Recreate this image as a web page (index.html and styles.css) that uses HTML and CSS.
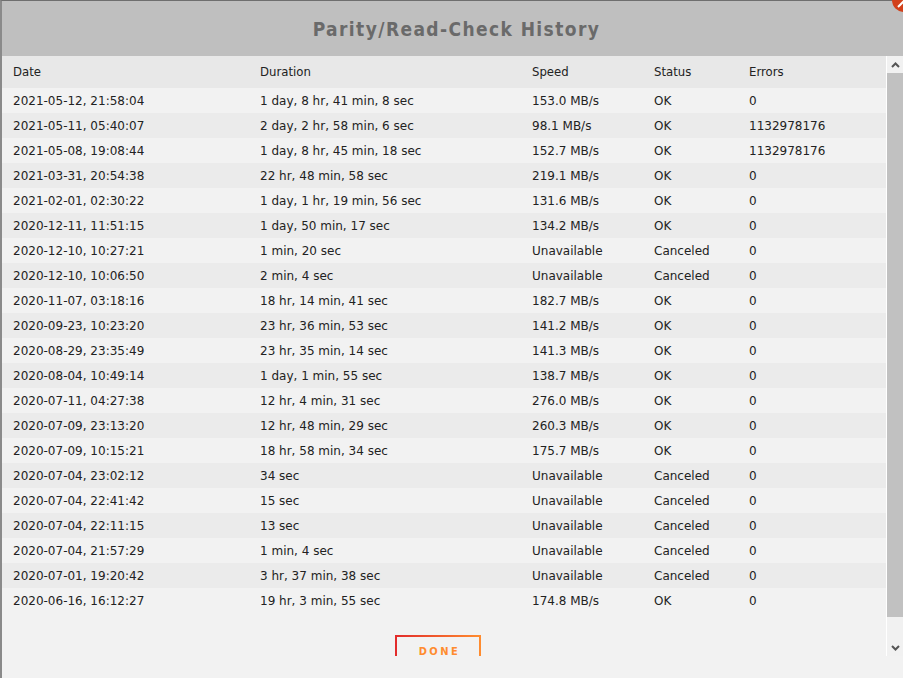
FILE: index.html
```html
<!DOCTYPE html>
<html lang="en">
<head>
    <meta charset="UTF-8" />
    <title>Parity/Read-Check History</title>
    <link rel="stylesheet" href="styles.css">
</head>
<body>
    <div class="dialog">
        <div class="close-btn">
            <svg width="10" height="10" viewBox="0 0 10 10"><path d="M2 8 L8 2" stroke="#fff" stroke-width="2"/></svg>
        </div>
        <div class="title-bar">
            <h1>Parity/Read-Check History</h1>
        </div>

        <div class="body-wrap">
            <div class="content">
                <table class="history">
                    <thead>
                        <tr>
                            <th class="c-date">Date</th>
                            <th class="c-dur">Duration</th>
                            <th class="c-speed">Speed</th>
                            <th class="c-status">Status</th>
                            <th>Errors</th>
                        </tr>
                    </thead>
                    <tbody>
                        <tr><td>2021-05-12, 21:58:04</td><td>1 day, 8 hr, 41 min, 8 sec</td><td>153.0 MB/s</td><td>OK</td><td>0</td></tr>
                        <tr><td>2021-05-11, 05:40:07</td><td>2 day, 2 hr, 58 min, 6 sec</td><td>98.1 MB/s</td><td>OK</td><td>1132978176</td></tr>
                        <tr><td>2021-05-08, 19:08:44</td><td>1 day, 8 hr, 45 min, 18 sec</td><td>152.7 MB/s</td><td>OK</td><td>1132978176</td></tr>
                        <tr><td>2021-03-31, 20:54:38</td><td>22 hr, 48 min, 58 sec</td><td>219.1 MB/s</td><td>OK</td><td>0</td></tr>
                        <tr><td>2021-02-01, 02:30:22</td><td>1 day, 1 hr, 19 min, 56 sec</td><td>131.6 MB/s</td><td>OK</td><td>0</td></tr>
                        <tr><td>2020-12-11, 11:51:15</td><td>1 day, 50 min, 17 sec</td><td>134.2 MB/s</td><td>OK</td><td>0</td></tr>
                        <tr><td>2020-12-10, 10:27:21</td><td>1 min, 20 sec</td><td>Unavailable</td><td>Canceled</td><td>0</td></tr>
                        <tr><td>2020-12-10, 10:06:50</td><td>2 min, 4 sec</td><td>Unavailable</td><td>Canceled</td><td>0</td></tr>
                        <tr><td>2020-11-07, 03:18:16</td><td>18 hr, 14 min, 41 sec</td><td>182.7 MB/s</td><td>OK</td><td>0</td></tr>
                        <tr><td>2020-09-23, 10:23:20</td><td>23 hr, 36 min, 53 sec</td><td>141.2 MB/s</td><td>OK</td><td>0</td></tr>
                        <tr><td>2020-08-29, 23:35:49</td><td>23 hr, 35 min, 14 sec</td><td>141.3 MB/s</td><td>OK</td><td>0</td></tr>
                        <tr><td>2020-08-04, 10:49:14</td><td>1 day, 1 min, 55 sec</td><td>138.7 MB/s</td><td>OK</td><td>0</td></tr>
                        <tr><td>2020-07-11, 04:27:38</td><td>12 hr, 4 min, 31 sec</td><td>276.0 MB/s</td><td>OK</td><td>0</td></tr>
                        <tr><td>2020-07-09, 23:13:20</td><td>12 hr, 48 min, 29 sec</td><td>260.3 MB/s</td><td>OK</td><td>0</td></tr>
                        <tr><td>2020-07-09, 10:15:21</td><td>18 hr, 58 min, 34 sec</td><td>175.7 MB/s</td><td>OK</td><td>0</td></tr>
                        <tr><td>2020-07-04, 23:02:12</td><td>34 sec</td><td>Unavailable</td><td>Canceled</td><td>0</td></tr>
                        <tr><td>2020-07-04, 22:41:42</td><td>15 sec</td><td>Unavailable</td><td>Canceled</td><td>0</td></tr>
                        <tr><td>2020-07-04, 22:11:15</td><td>13 sec</td><td>Unavailable</td><td>Canceled</td><td>0</td></tr>
                        <tr><td>2020-07-04, 21:57:29</td><td>1 min, 4 sec</td><td>Unavailable</td><td>Canceled</td><td>0</td></tr>
                        <tr><td>2020-07-01, 19:20:42</td><td>3 hr, 37 min, 38 sec</td><td>Unavailable</td><td>Canceled</td><td>0</td></tr>
                        <tr><td>2020-06-16, 16:12:27</td><td>19 hr, 3 min, 55 sec</td><td>174.8 MB/s</td><td>OK</td><td>0</td></tr>
                    </tbody>
                </table>

                <div class="actions">
                    <button type="button" class="btn-done">DONE</button>
                </div>
            </div>

            <div class="scrollbar">
                <div class="sb-arrow">
                    <svg width="9" height="6" viewBox="0 0 9 6"><path d="M1 5 L4.5 1.5 L8 5" fill="none" stroke="#555" stroke-width="2"/></svg>
                </div>
                <div class="sb-track">
                    <div class="sb-thumb"></div>
                </div>
                <div class="sb-arrow">
                    <svg width="9" height="6" viewBox="0 0 9 6"><path d="M1 1 L4.5 4.5 L8 1" fill="none" stroke="#555" stroke-width="2"/></svg>
                </div>
            </div>
        </div>
    </div>
</body>
</html>
```

FILE: styles.css
```css
body {
    margin: 0;
    padding: 0;
    background: #f2f2f2;
    font-family: 'DejaVu Sans', Verdana, sans-serif;
    color: #222;
    overflow: hidden;
}

.dialog {
    position: relative;
    height: 678px;
    border-left: 2px solid #8a8a8a;
    border-top: 1px solid #6e6e6e;
    box-sizing: border-box;
    background: #f2f2f2;
}

.close-btn {
    position: absolute;
    top: -13px;
    right: -13px;
    width: 24px;
    height: 24px;
    border-radius: 50%;
    background: #d2401a;
    display: flex;
    align-items: flex-end;
    justify-content: flex-start;
    padding: 0 0 3px 4px;
    box-sizing: border-box;
}

.title-bar {
    height: 55px;
    background: #bfbfbf;
    display: flex;
    align-items: center;
    justify-content: center;
    padding-left: 8px;
}

.title-bar h1 {
    margin: 0;
    font-family: 'DejaVu Sans Condensed', 'DejaVu Sans', sans-serif;
    font-size: 19px;
    font-weight: bold;
    letter-spacing: 1.4px;
    color: #6a6a6a;
}

.body-wrap {
    display: flex;
    height: 600px;
}

.content {
    flex: 1;
    overflow: hidden;
}

.history {
    width: 100%;
    border-collapse: collapse;
    font-size: 12px;
}

.history th {
    font-family: 'DejaVu Sans Condensed', 'DejaVu Sans', sans-serif;
    font-weight: normal;
    font-size: 13px;
    text-align: left;
    height: 32px;
    padding: 0 0 1px 11px;
    box-sizing: border-box;
    background: #e8e8e8;
    color: #222;
}

.history td {
    height: 25px;
    padding: 1px 0 0 11px;
    box-sizing: border-box;
    white-space: nowrap;
}

.history tbody tr:nth-child(odd) {
    background: #f2f2f2;
}

.history tbody tr:nth-child(even) {
    background: #ebebeb;
}

.c-date { width: 247px; }
.c-dur { width: 272px; }
.c-speed { width: 122px; }
.c-status { width: 95px; }

.actions {
    display: flex;
    justify-content: center;
    padding-top: 22px;
    padding-right: 12px;
}

.btn-done {
    width: 86px;
    height: 36px;
    background: transparent;
    border: 2px solid;
    border-image: linear-gradient(to right, #e22b2b, #ff8c2f) 1;
    color: #ff8c2f;
    font-family: 'DejaVu Sans Condensed', 'DejaVu Sans', sans-serif;
    font-size: 11px;
    font-weight: bold;
    letter-spacing: 2.5px;
    padding: 8px 0 0 3px;
    display: flex;
    justify-content: center;
    align-items: flex-start;
}

.scrollbar {
    width: 16px;
    border-left: 1px solid #fff;
    background: #f1f1f1;
    display: flex;
    flex-direction: column;
}

.sb-arrow {
    height: 17px;
    display: flex;
    align-items: center;
    justify-content: center;
}

.sb-track {
    flex: 1;
}

.sb-thumb {
    height: 544px;
    background: #c1c1c1;
}
```
